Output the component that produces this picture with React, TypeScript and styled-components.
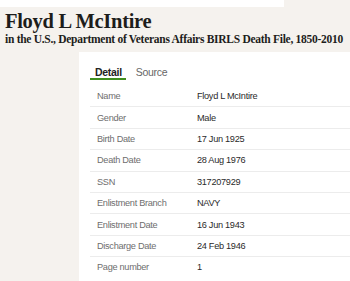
import React from "react";
import styled, { createGlobalStyle } from "styled-components";

const Global = createGlobalStyle`
  html, body {
    margin: 0;
    padding: 0;
    background: #f5f2ee;
  }
`;

const Page = styled.div`
  width: 350px;
  height: 281px;
  overflow: hidden;
  display: flex;
  flex-direction: column;
`;

const TopStrip = styled.div`
  width: 284px;
  height: 7px;
  flex-shrink: 0;
  background: #ffffff;
`;

const Header = styled.div`
  box-sizing: border-box;
  padding: 4px 0 0 5px;
  height: 45px;
  flex-shrink: 0;
`;

const Title = styled.h1`
  margin: 0;
  font-family: "Liberation Serif", serif;
  font-weight: 700;
  font-size: 20.5px;
  line-height: 21px;
  color: #1d1d1b;
  letter-spacing: -0.3px;
`;

const Subtitle = styled.div`
  font-family: "Liberation Serif", serif;
  font-weight: 700;
  font-size: 11.5px;
  line-height: 14px;
  color: #1d1d1b;
  letter-spacing: -0.28px;
  white-space: nowrap;
`;

const Panel = styled.div`
  margin-left: 79px;
  flex: 1;
  background: #ffffff;
  padding: 13px 0 0 11px;
`;

const Tabs = styled.div`
  display: flex;
  gap: 5px;
`;

const Tab = styled.div<{ $active?: boolean }>`
  font-family: "Liberation Sans", Arial, sans-serif;
  font-size: 10.5px;
  letter-spacing: -0.3px;
  font-weight: ${(p) => (p.$active ? 700 : 400)};
  color: ${(p) => (p.$active ? "#222" : "#666")};
  padding: 0 4px 0 5px;
  height: 13px;
  line-height: 14px;
  border-bottom: 2px solid ${(p) => (p.$active ? "#3f8f1f" : "transparent")};
`;

const Table = styled.div`
  margin-top: 6px;
`;

const Row = styled.div<{ $last?: boolean }>`
  display: grid;
  grid-template-columns: 100px 1fr;
  height: 21.4px;
  align-items: center;
  padding-left: 7px;
  border-bottom: 1px solid ${(p) => (p.$last ? "transparent" : "#ececec")};
  box-sizing: border-box;
  font-family: "Liberation Sans", Arial, sans-serif;
  font-size: 9.2px;
  letter-spacing: -0.3px;
`;

const Label = styled.span`
  color: #6e6e6e;
`;

const Value = styled.span`
  color: #2a2a2a;
`;

const rows = [
  ["Name", "Floyd L McIntire"],
  ["Gender", "Male"],
  ["Birth Date", "17 Jun 1925"],
  ["Death Date", "28 Aug 1976"],
  ["SSN", "317207929"],
  ["Enlistment Branch", "NAVY"],
  ["Enlistment Date", "16 Jun 1943"],
  ["Discharge Date", "24 Feb 1946"],
  ["Page number", "1"],
];

export default function App() {
  return (
    <>
      <Global />
      <Page>
        <TopStrip />
        <Header>
          <Title>Floyd L McIntire</Title>
          <Subtitle>
            in the U.S., Department of Veterans Affairs BIRLS Death File, 1850-2010
          </Subtitle>
        </Header>
        <Panel>
          <Tabs>
            <Tab $active>Detail</Tab>
            <Tab>Source</Tab>
          </Tabs>
          <Table>
            {rows.map(([label, value], i) => (
              <Row key={label} $last={i === rows.length - 1}>
                <Label>{label}</Label>
                <Value>{value}</Value>
              </Row>
            ))}
          </Table>
        </Panel>
      </Page>
    </>
  );
}
